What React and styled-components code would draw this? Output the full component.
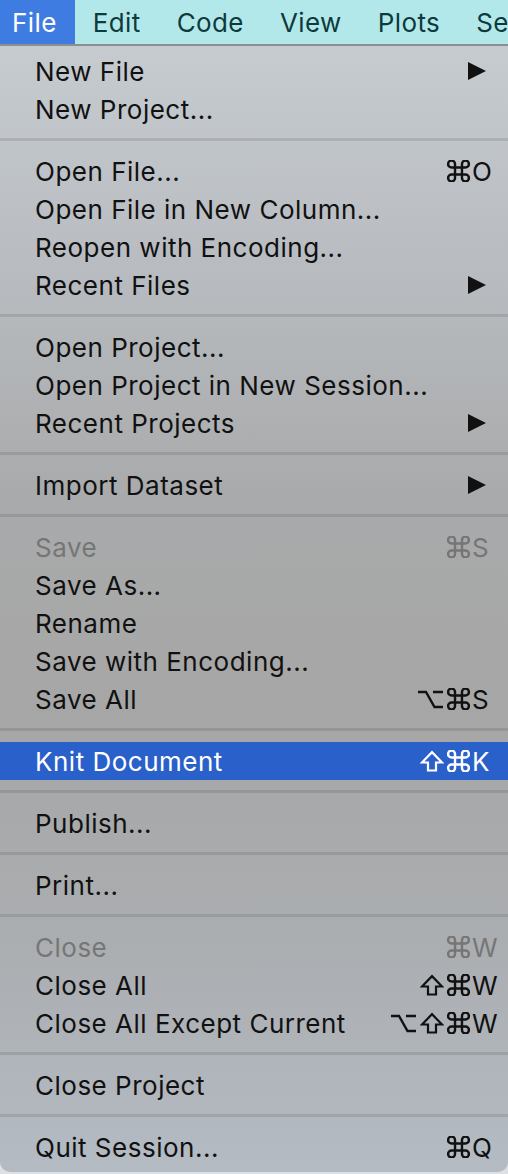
import React from "react";
import styled, { createGlobalStyle } from "styled-components";

const GlobalStyle = createGlobalStyle`
  html, body {
    margin: 0;
    padding: 0;
    background: #dde1e5;
  }
  body {
    font-family: Inter, "Liberation Sans", "DejaVu Sans", sans-serif;
    -webkit-font-smoothing: antialiased;
  }
`;

const menus = ["File", "Edit", "Code", "View", "Plots", "Session"];

const sections = [
  [
    { label: "New File", arrow: true },
    { label: "New Project..." },
  ],
  [
    { label: "Open File...", mods: ["cmd"], key: "O" },
    { label: "Open File in New Column..." },
    { label: "Reopen with Encoding..." },
    { label: "Recent Files", arrow: true },
  ],
  [
    { label: "Open Project..." },
    { label: "Open Project in New Session..." },
    { label: "Recent Projects", arrow: true },
  ],
  [{ label: "Import Dataset", arrow: true }],
  [
    { label: "Save", mods: ["cmd"], key: "S", disabled: true },
    { label: "Save As..." },
    { label: "Rename" },
    { label: "Save with Encoding..." },
    { label: "Save All", mods: ["opt", "cmd"], key: "S" },
  ],
  [{ label: "Knit Document", mods: ["shift", "cmd"], key: "K", active: true }],
  [{ label: "Publish..." }],
  [{ label: "Print..." }],
  [
    { label: "Close", mods: ["cmd"], key: "W", disabled: true },
    { label: "Close All", mods: ["shift", "cmd"], key: "W" },
    { label: "Close All Except Current", mods: ["opt", "shift", "cmd"], key: "W" },
  ],
  [{ label: "Close Project" }],
  [{ label: "Quit Session...", mods: ["cmd"], key: "Q" }],
];

// modifier key symbols (⌘ ⌥ ⇧)
const CmdIcon = () => (
  <svg width="23" height="22" viewBox="2.5 2.5 19 19" fill="none" stroke="currentColor" strokeWidth="2.1">
    <path d="M15 6v12a3 3 0 1 0 3-3H6a3 3 0 1 0 3 3V6a3 3 0 1 0-3 3h12a3 3 0 1 0-3-3" />
  </svg>
);

const OptIcon = () => (
  <svg width="27" height="20" viewBox="0 0 27 20" fill="none" stroke="currentColor" strokeWidth="2.4">
    <path d="M1 3h8l8.5 15H26M16 3h10" />
  </svg>
);

const ShiftIcon = () => (
  <svg width="24" height="22" viewBox="0 0 24 22" fill="none" stroke="currentColor" strokeWidth="2.2" strokeLinejoin="miter">
    <path d="M8 20.5v-8H2L12 2.2l10 10.3h-6v8H8z" />
  </svg>
);

const modIcons = { cmd: CmdIcon, opt: OptIcon, shift: ShiftIcon };

const App = () => {
  return (
    <>
      <GlobalStyle />
      <Screen>
        <MenuBar>
          {menus.map((m, i) => (
            <MenuTitle key={m} $first={i === 0} $open={i === 0}>
              {m}
            </MenuTitle>
          ))}
        </MenuBar>
        <Dropdown>
          {sections.map((section, si) => (
            <React.Fragment key={si}>
              {si > 0 && <Separator />}
              {section.map((item) => (
                <Row key={item.label} $active={item.active} $disabled={item.disabled}>
                  <Label>{item.label}</Label>
                  {item.arrow && <Arrow />}
                  {item.key && (
                    <Shortcut>
                      <Mods>
                        {item.mods.map((m) => {
                          const Icon = modIcons[m];
                          return <Icon key={m} />;
                        })}
                      </Mods>
                      <Key>{item.key}</Key>
                    </Shortcut>
                  )}
                </Row>
              ))}
            </React.Fragment>
          ))}
        </Dropdown>
      </Screen>
    </>
  );
};

export default App;

const Screen = styled.div`
  width: 508px;
  height: 1174px;
  overflow: hidden;
  display: flex;
  flex-direction: column;
`;

const MenuBar = styled.div`
  height: 44px;
  flex: 0 0 44px;
  display: flex;
  align-items: stretch;
  background: #b3e8eb;
  border-bottom: 2px solid #8b8f92;
  white-space: nowrap;
  overflow: hidden;
`;

const MenuTitle = styled.div`
  display: flex;
  align-items: center;
  padding: 0 18px 0 ${({ $first }) => ($first ? "12px" : "18px")};
  font-size: 26px;
  letter-spacing: 0.4px;
  color: ${({ $open }) => ($open ? "#ffffff" : "#0e3a3b")};
  background: ${({ $open }) => ($open ? "#3f7ce1" : "transparent")};
`;

const Dropdown = styled.div`
  padding: 6px 0;
  background: linear-gradient(
    180deg,
    #c6cbd0 0%,
    #b8bcc0 20%,
    #a9aaab 40%,
    #a6a6a6 60%,
    #abaeb1 80%,
    #b4bbc3 100%
  );
  border-radius: 0 0 10px 10px;
`;

const Row = styled.div`
  height: 38px;
  display: flex;
  align-items: center;
  padding: 0 8px 0 35px;
  font-size: 26px;
  letter-spacing: 0.5px;
  color: ${({ $active, $disabled }) =>
    $active ? "#ffffff" : $disabled ? "#767676" : "#111111"};
  background: ${({ $active }) => ($active ? "#2a60c9" : "transparent")};
`;

const Label = styled.span`
  flex: 1;
  white-space: nowrap;
`;

const Separator = styled.div`
  height: 3px;
  margin: 10px 0 11px;
  background: rgba(0, 0, 0, 0.1);
`;

const Arrow = styled.span`
  width: 0;
  height: 0;
  margin-right: 14px;
  border-top: 9.5px solid transparent;
  border-bottom: 9.5px solid transparent;
  border-left: 18px solid #111111;
`;

const Shortcut = styled.span`
  display: flex;
  align-items: center;
`;

const Mods = styled.span`
  display: flex;
  align-items: center;
  gap: 3px;
  margin-right: 2px;
`;

const Key = styled.span`
  width: 28px;
  letter-spacing: 0;
  text-align: left;
`;
